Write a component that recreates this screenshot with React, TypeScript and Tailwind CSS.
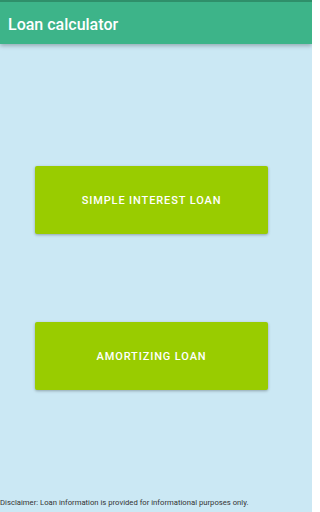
export default function App() {
  return (
    <div
      className="flex h-[512px] w-[312px] flex-col overflow-hidden bg-[#cbe8f4]"
      style={{ fontFamily: "Roboto, 'Liberation Sans', sans-serif" }}
    >
      {/* App bar */}
      <div className="relative z-10 flex h-[44px] items-center border-t-2 border-[#2f8f6a] bg-[#3db489] px-[8px] pt-[3px] shadow-[0_2px_4px_rgba(0,0,0,0.25)]">
        <h1 className="text-[16px] font-medium text-white">Loan calculator</h1>
      </div>

      {/* Buttons */}
      <div className="flex flex-1 flex-col items-start pl-[35px] pt-[122px]">
        <button className="flex h-[68px] w-[233px] items-center justify-center rounded-[2px] bg-[#99cc00] pt-[2px] text-[11px] font-medium tracking-[0.08em] text-white shadow-[0_1px_3px_rgba(0,0,0,0.3)]">
          SIMPLE INTEREST LOAN
        </button>
        <button className="mt-[88px] flex h-[68px] w-[233px] items-center justify-center rounded-[2px] bg-[#99cc00] pt-[2px] text-[11px] font-medium tracking-[0.08em] text-white shadow-[0_1px_3px_rgba(0,0,0,0.3)]">
          AMORTIZING LOAN
        </button>
      </div>

      {/* Disclaimer */}
      <p className="pb-[4px] text-[7.7px] leading-[10px] text-[#333]">
        Disclaimer: Loan information is provided for informational purposes only.
      </p>
    </div>
  );
}
